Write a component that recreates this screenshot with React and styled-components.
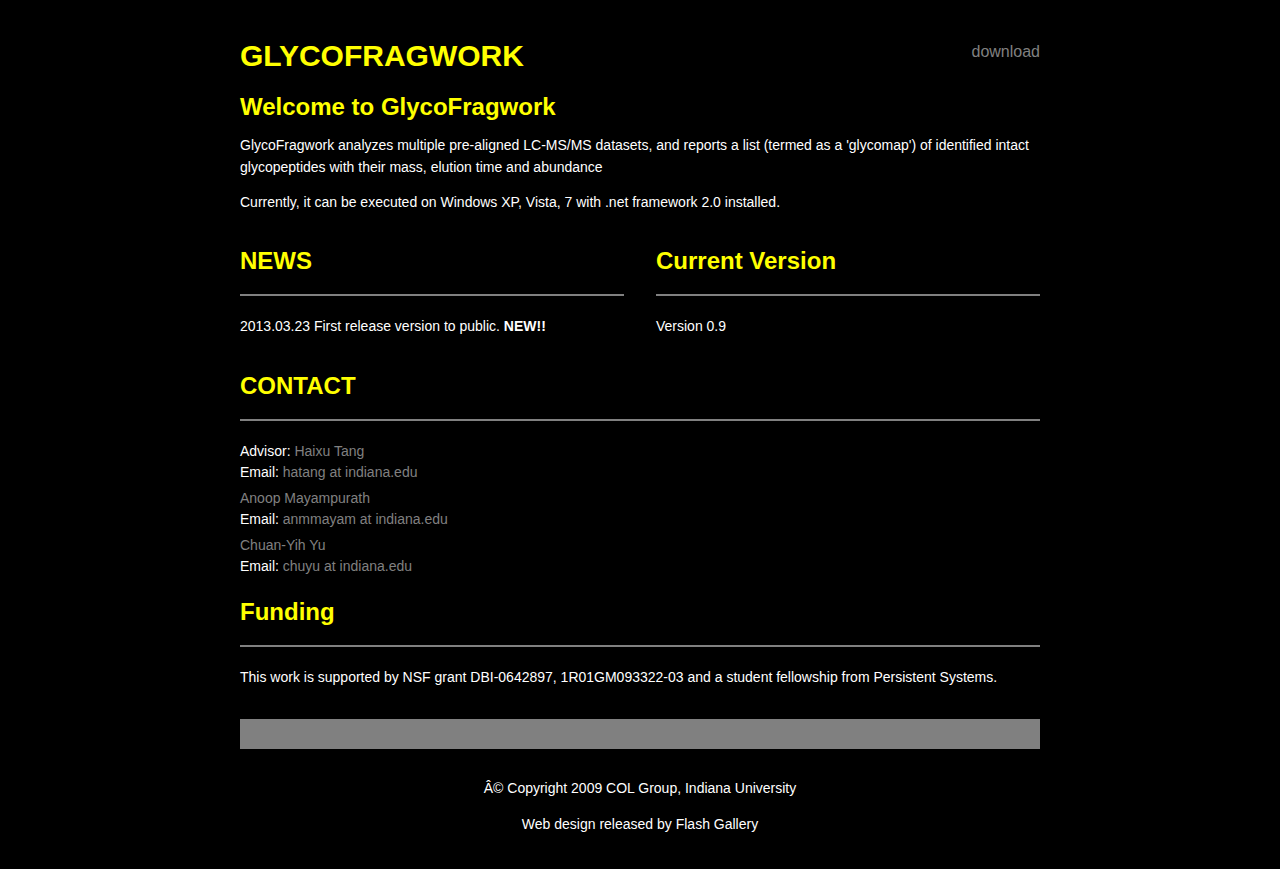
import React from "react";
import styled, { createGlobalStyle } from "styled-components";

const Global = createGlobalStyle`
  html, body { margin: 0; padding: 0; background: #000; }
  body {
    font-family: "Liberation Sans", Arial, Helvetica, sans-serif;
    font-size: 14px;
    color: #fff;
  }
`;

const Page = styled.div`
  width: 800px;
  margin: 0 auto;
  padding: 38px 0 26px;
`;

const Header = styled.header`
  display: flex;
  justify-content: space-between;
  align-items: flex-start;
`;

const Title = styled.h1`
  margin: 0;
  font-size: 30px;
  line-height: 36px;
  font-weight: bold;
  color: #ffff00;
`;

const NavLink = styled.a`
  margin-top: 5px;
  font-size: 16px;
  line-height: 18px;
  color: #808080;
  text-decoration: none;
`;

const Heading = styled.h2`
  margin: ${(p) => p.$top || 0}px 0 0;
  padding-top: ${(p) => (p.$top ? 0 : 1)}px;
  font-size: 24px;
  line-height: 28px;
  font-weight: bold;
  color: #ffff00;
`;

const Text = styled.p`
  margin: ${(p) => (p.$top !== undefined ? p.$top : 13)}px 0 0;
  line-height: 22px;
`;

const Columns = styled.div`
  display: grid;
  grid-template-columns: 1fr 1fr;
  column-gap: 32px;
`;

const Section = styled.section`
  padding-top: ${(p) => (p.$gap !== undefined ? p.$gap : 33)}px;
`;

const Rule = styled.hr`
  margin: 19px 0 0;
  border: 0;
  height: 2px;
  background: #808080;
`;

const Body = styled.div`
  margin-top: ${(p) => p.$top || 19}px;
`;

const Contact = styled.p`
  margin: 0 0 5px;
  line-height: 21px;
  &:last-child { margin-bottom: 0; }
`;

const Muted = styled.span`
  color: #808080;
`;

const Bar = styled.div`
  margin-top: 31px;
  height: 30px;
  background: #808080;
`;

const Footer = styled.footer`
  padding-top: 28px;
  display: flex;
  flex-direction: column;
  gap: 14px;
`;

const FooterLine = styled.p`
  margin: 0;
  line-height: 22px;
  text-align: center;
`;

const contacts = [
  { label: "Advisor:", name: "Haixu Tang", email: "hatang at indiana.edu" },
  { name: "Anoop Mayampurath", email: "anmmayam at indiana.edu" },
  { name: "Chuan-Yih Yu", email: "chuyu at indiana.edu" },
];

export default function App() {
  return (
    <>
      <Global />
      <Page>
        <Header>
          <Title>GLYCOFRAGWORK</Title>
          <NavLink href="#">download</NavLink>
        </Header>

        <Heading $top={19}>Welcome to GlycoFragwork</Heading>
        <Text>
          GlycoFragwork analyzes multiple pre-aligned LC-MS/MS datasets, and reports a list
          (termed as a 'glycomap') of identified intact glycopeptides with their mass, elution
          time and abundance
        </Text>
        <Text>Currently, it can be executed on Windows XP, Vista, 7 with .net framework 2.0 installed.</Text>

        <Columns>
          <Section>
            <Heading>NEWS</Heading>
            <Rule />
            <Body>
              <Text $top={0}>
                2013.03.23 First release version to public. <b>NEW!!</b>
              </Text>
            </Body>
          </Section>
          <Section>
            <Heading>Current Version</Heading>
            <Rule />
            <Body>
              <Text $top={0}>Version 0.9</Text>
            </Body>
          </Section>
        </Columns>

        <Section $gap={34}>
          <Heading>CONTACT</Heading>
          <Rule />
          <Body $top={20}>
            {contacts.map((c) => (
              <Contact key={c.email}>
                {c.label && <>{c.label} </>}
                <Muted>{c.name}</Muted>
                <br />
                Email: <Muted>{c.email}</Muted>
              </Contact>
            ))}
          </Body>
        </Section>

        <Section $gap={20}>
          <Heading>Funding</Heading>
          <Rule />
          <Body>
            <Text $top={0}>
              This work is supported by NSF grant DBI-0642897, 1R01GM093322-03 and a student
              fellowship from Persistent Systems.
            </Text>
          </Body>
        </Section>

        <Bar />

        <Footer>
          <FooterLine>Â© Copyright 2009 COL Group, Indiana University</FooterLine>
          <FooterLine>Web design released by Flash Gallery</FooterLine>
        </Footer>
      </Page>
    </>
  );
}
